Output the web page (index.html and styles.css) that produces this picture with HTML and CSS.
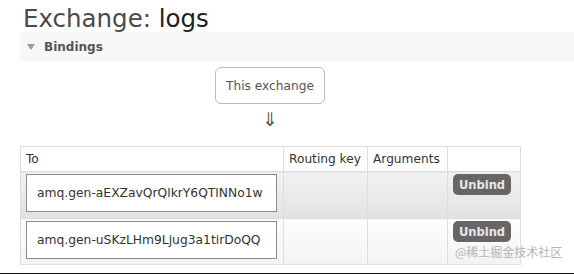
FILE: index.html
```html
<!DOCTYPE html>
<html>
<head>
<meta charset="utf-8">
<link rel="stylesheet" href="styles.css">
</head>
<body>
<div class="page">
  <h1 class="title">Exchange: <span class="name">logs</span></h1>
  <div class="section-bar">
    <span class="caret"></span>
    <span class="section-label">Bindings</span>
  </div>
  <div class="content">
    <div class="source-box">This exchange</div>
    <div class="arrow">&#8659;</div>
    <table class="bindings">
      <colgroup>
        <col class="c-to">
        <col class="c-key">
        <col class="c-args">
        <col class="c-act">
      </colgroup>
      <thead>
        <tr>
          <th>To</th>
          <th>Routing key</th>
          <th>Arguments</th>
          <th></th>
        </tr>
      </thead>
      <tbody>
        <tr class="row-alt1">
          <td><div class="queue">amq.gen-aEXZavQrQlkrY6QTlNNo1w</div></td>
          <td></td>
          <td></td>
          <td><button class="unbind">Unbind</button></td>
        </tr>
        <tr class="row-alt2">
          <td><div class="queue">amq.gen-uSKzLHm9Ljug3a1tirDoQQ</div></td>
          <td></td>
          <td></td>
          <td><button class="unbind">Unbind</button></td>
        </tr>
      </tbody>
    </table>
    <div class="watermark">@稀土掘金技术社区</div>
  </div>
  <div class="bottom-rule"></div>
</div>
</body>
</html>
```
FILE: styles.css
```css
html, body {
  margin: 0;
  padding: 0;
  background: #fff;
}
body {
  font-family: "DejaVu Sans", Verdana, sans-serif;
  font-size: 12.2px;
  color: #444;
  width: 574px;
  height: 274px;
  overflow: hidden;
}
.page {
  display: flex;
  flex-direction: column;
}
.title {
  margin: 0;
  padding: 2.5px 0 0 23px;
  height: 29.5px;
  line-height: 32px;
  font-size: 24.5px;
  font-weight: normal;
  color: #4a4a4a;
  overflow: visible;
}
.title .name {
  color: #222;
}
.section-bar {
  margin-left: 20px;
  height: 29px;
  background: #f7f7f7;
  display: flex;
  align-items: center;
  gap: 9px;
  padding-left: 7px;
}
.caret {
  width: 0;
  height: 0;
  border-left: 4.5px solid transparent;
  border-right: 4.5px solid transparent;
  border-top: 6px solid #9a9a9a;
  margin-top: 1px;
}
.section-label {
  font-weight: bold;
  font-size: 12px;
  color: #555;
}
.content {
  margin-left: 20px;
  width: 500px;
  position: relative;
  display: flex;
  flex-direction: column;
}
.source-box {
  align-self: center;
  margin-top: 6px;
  width: 110px;
  height: 37px;
  box-sizing: border-box;
  border: 1px solid #bbb;
  border-radius: 6px;
  display: flex;
  align-items: center;
  justify-content: center;
  color: #555;
  font-size: 12.2px;
}
.arrow {
  height: 42px;
  display: flex;
  justify-content: center;
  font-size: 19px;
  line-height: 31px;
  color: #555;
}
.bindings {
  border-collapse: collapse;
  width: 500px;
  table-layout: fixed;
  border: 1px solid #ddd;
}
.c-to { width: 263px; }
.c-key { width: 84px; }
.c-args { width: 80px; }
.c-act { width: 73px; }
.bindings th {
  height: 24px;
  padding: 0 5px;
  text-align: left;
  font-weight: normal;
  color: #333;
  border: 1px solid #ddd;
  background: #fff;
  white-space: nowrap;
}
.bindings td {
  padding: 2px 5px 5px 5px;
  vertical-align: top;
  border: 1px solid #ddd;
}
.row-alt1 td {
  background: linear-gradient(#f1f1f1, #e2e2e2);
  height: 39px;
}
.row-alt2 td {
  background: linear-gradient(#fdfdfd, #f3f3f3);
  height: 38px;
}
.queue {
  box-sizing: border-box;
  width: 251px;
  height: 38px;
  border: 1px solid #8c8c8c;
  background: #fff;
  display: flex;
  align-items: center;
  padding-left: 10px;
  color: #333;
  font-size: 12.3px;
  white-space: nowrap;
}
.unbind {
  display: block;
  width: 58px;
  height: 21px;
  padding: 0;
  border: none;
  border-radius: 5px;
  background: #666;
  color: #e6e6e6;
  font-family: "DejaVu Sans Condensed", "DejaVu Sans", sans-serif;
  font-stretch: condensed;
  font-weight: bold;
  font-size: 12.8px;
  line-height: 21px;
  text-align: center;
}
.watermark {
  position: absolute;
  left: 435px;
  top: 184px;
  font-family: "Noto Sans CJK SC", sans-serif;
  font-size: 12px;
  line-height: 14px;
  color: #b4b4b4;
  white-space: nowrap;
}
.bottom-rule {
  margin-top: 8px;
  height: 2px;
  background: #111;
}
```
